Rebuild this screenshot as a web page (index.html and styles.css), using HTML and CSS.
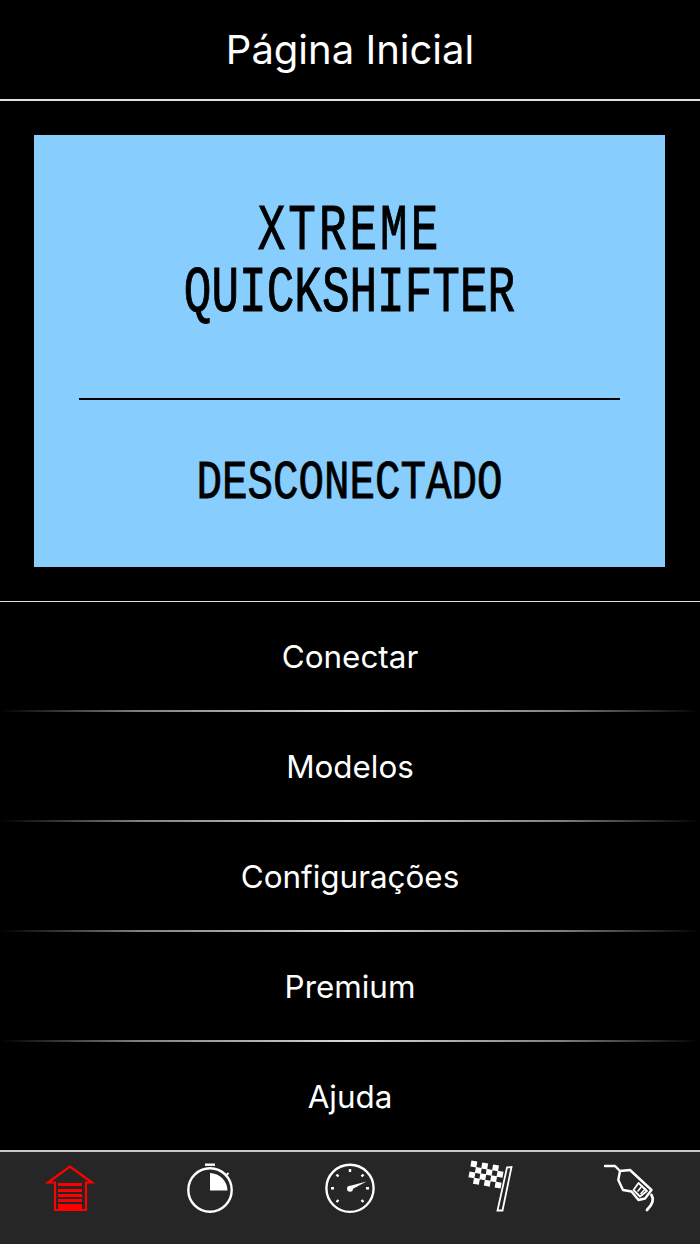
FILE: index.html
```html
<!DOCTYPE html>
<html lang="pt-BR">
<head>
    <meta charset="UTF-8">
    <meta name="viewport" content="width=device-width, initial-scale=1.0">
    <title>Página Inicial</title>
    <link rel="stylesheet" href="styles.css">
</head>
<body>
    <div class="app">
        <header class="topBar">
            <h1>Página Inicial</h1>
        </header>
        <section class="screenWrap">
            <div class="screen">
                <div class="screenTitle">
                    <span class="lcd lcdBig lcdWide">XTREME</span>
                    <span class="lcd lcdBig">QUICKSHIFTER</span>
                </div>
                <div class="screenLine"></div>
                <div class="screenStatus">
                    <span class="lcd lcdSmall">DESCONECTADO</span>
                </div>
            </div>
        </section>
        <nav class="menu">
            <div class="menuRow">Conectar</div>
            <div class="menuRow">Modelos</div>
            <div class="menuRow">Configurações</div>
            <div class="menuRow">Premium</div>
            <div class="menuRow">Ajuda</div>
        </nav>
        <footer class="tabBar">
            <div class="tab">
                <svg viewBox="0 0 60 60" width="60" height="60">
                    <path d="M8 24.5 L30 8.5 L52 24.5 H46 V52 H15 V24.5 Z" fill="none" stroke="#f00" stroke-width="2.2"/>
                    <path d="M18 25h24v3H18zM18 31h24v3H18zM18 36h24v3H18zM18 41h24v3H18zM18 46h24v5H18z" fill="#f00"/>
                </svg>
            </div>
            <div class="tab">
                <svg viewBox="0 0 60 60" width="60" height="60">
                    <circle cx="30" cy="32" r="21.7" fill="none" stroke="#fff" stroke-width="2.4"/>
                    <path d="M25 6.7h10" stroke="#fff" stroke-width="2.4"/>
                    <path d="M46 17.5l2.5-2.5" stroke="#fff" stroke-width="2"/>
                    <path d="M30 32.5V15A18 18 0 0 1 47.5 32.5Z" fill="#fff"/>
                </svg>
            </div>
            <div class="tab">
                <svg viewBox="0 0 60 60" width="60" height="60">
                    <circle cx="30" cy="30.3" r="23.6" fill="none" stroke="#fff" stroke-width="2.4"/>
                    <circle cx="30" cy="30.8" r="3" fill="#fff"/>
                    <path d="M29 33L46.5 23.5L29.5 28Z" fill="#fff"/>
                    <path d="M30 11v3M11 30.3h3M46 30.3h3M16.5 16.5l2 2M43.5 16.5l-2 2M16.5 44l2-2M43.5 44l-2-2" stroke="#fff" stroke-width="2.4"/>
                </svg>
            </div>
            <div class="tab">
                <svg viewBox="0 0 60 60" width="60" height="60">
                    <path d="M47 9.5L51.5 9L42.5 52.5H37.5Z" fill="none" stroke="#fff" stroke-width="1.8"/>
                    <g fill="#fff" transform="rotate(10 27 18)">
                        <rect x="9" y="5.5" width="6" height="6"/>
                        <rect x="20" y="5.5" width="6" height="6"/>
                        <rect x="31" y="5.5" width="6" height="6"/>
                        <rect x="14.5" y="11" width="6" height="6"/>
                        <rect x="25.5" y="11" width="6" height="6"/>
                        <rect x="36.5" y="11" width="6" height="6"/>
                        <rect x="9" y="16.5" width="6" height="6"/>
                        <rect x="20" y="16.5" width="6" height="6"/>
                        <rect x="31" y="16.5" width="6" height="6"/>
                        <rect x="14.5" y="22" width="6" height="6"/>
                        <rect x="25.5" y="22" width="6" height="6"/>
                        <rect x="36.5" y="22" width="6" height="6"/>
                    </g>
                </svg>
            </div>
            <div class="tab">
                <svg viewBox="0 0 60 60" width="60" height="60" fill="none" stroke="#fff" stroke-width="2.4" stroke-linejoin="round" stroke-linecap="round">
                    <path d="M5 8H15L20 13"/>
                    <path d="M20 13L30 12L51.5 32L45 40.5L38.5 42L31.5 33.5L23 32L18.3 22Z"/>
                    <path d="M33.5 32L38.5 25L47 33L40 38.5Z" stroke-width="1.8"/>
                    <path d="M38 33L42 28M41 35.5L45 31" stroke-width="1.6"/>
                    <path d="M51.5 37C54 41 53 46 47 52" stroke-width="2.8"/>
                </svg>
            </div>
        </footer>
    </div>
</body>
</html>
```

FILE: styles.css
```css
html, body {
    margin: 0;
    background-color: #000;
}
.app {
    width: 700px;
    height: 1244px;
    display: flex;
    flex-direction: column;
    font-family: Inter, 'Liberation Sans', sans-serif;
    color: #fff;
    overflow: hidden;
}
.topBar {
    height: 99px;
    border-bottom: 2px solid #e0e0e0;
    display: flex;
    align-items: center;
    justify-content: center;
}
.topBar h1 {
    margin: 0;
    font-size: 40px;
    font-weight: 400;
}
.screenWrap {
    height: 501px;
    padding: 34px;
    box-sizing: border-box;
    border-bottom: 1px solid #e0e0e0;
}
.screen {
    width: 631px;
    height: 432px;
    background-color: #87cdfd;
    display: flex;
    flex-direction: column;
    color: #000;
}
.screenTitle {
    height: 246px;
    padding-top: 10px;
    box-sizing: border-box;
    display: flex;
    flex-direction: column;
    align-items: center;
    justify-content: center;
    gap: 20px;
}
.screenLine {
    height: 2px;
    margin: 17px 45px 0;
    background-color: #000;
}
.screenStatus {
    flex: 1;
    display: flex;
    align-items: center;
    justify-content: center;
}
.lcd {
    display: block;
    font-family: 'Liberation Mono', monospace;
    -webkit-text-stroke: 0.7px #000;
    white-space: nowrap;
}
.lcdBig {
    font-size: 46px;
    line-height: 42px;
    transform: scaleY(1.42);
}
.lcdWide {
    letter-spacing: 3px;
}
.lcdSmall {
    font-size: 42.5px;
    line-height: 50px;
    transform: scaleY(1.25);
}
.menu {
    display: flex;
    flex-direction: column;
}
.menuRow {
    height: 110px;
    box-sizing: border-box;
    display: flex;
    align-items: center;
    justify-content: center;
    font-size: 31.4px;
    padding-bottom: 1px;
    background: linear-gradient(to right, transparent, #808080 20%, #d8d8d8 50%, #808080 80%, transparent) no-repeat bottom / 100% 2px;
}
.menuRow:last-child {
    height: 108px;
    padding: 2px 0 0;
    background: none;
}
.tabBar {
    flex: 1;
    background-color: #262626;
    border-top: 2px solid #c8c8c8;
    display: grid;
    grid-template-columns: repeat(5, 1fr);
}
.tab {
    display: flex;
    justify-content: center;
    padding-top: 6px;
}
.tab svg {
    display: block;
}
```
